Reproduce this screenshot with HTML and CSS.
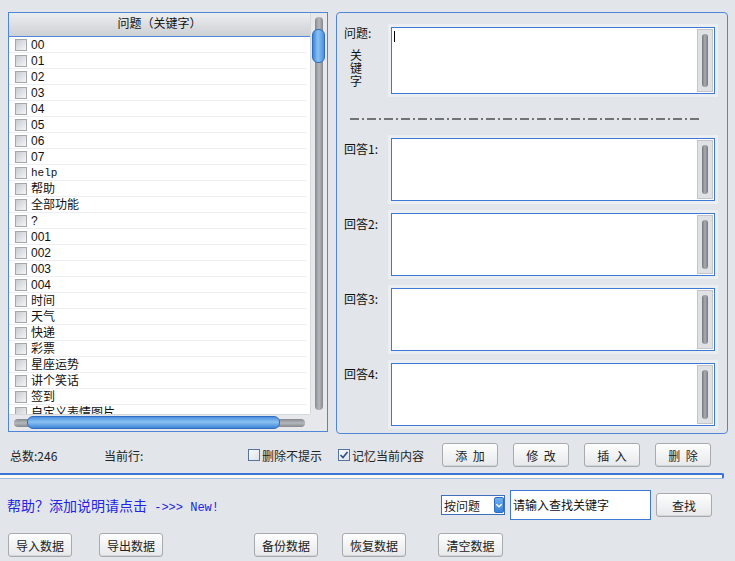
FILE: index.html
```html
<!DOCTYPE html>
<html lang="zh-CN">
<head>
<meta charset="utf-8">
<title>关键字回复</title>
<link rel="stylesheet" href="styles.css">
</head>
<body>
<div class="top">
  <div class="listbox">
    <div class="list-main">
      <div class="list-header">问题（关键字）</div>
      <div class="row"><span class="cb"></span><span>00</span></div>
      <div class="row"><span class="cb"></span><span>01</span></div>
      <div class="row"><span class="cb"></span><span>02</span></div>
      <div class="row"><span class="cb"></span><span>03</span></div>
      <div class="row"><span class="cb"></span><span>04</span></div>
      <div class="row"><span class="cb"></span><span>05</span></div>
      <div class="row"><span class="cb"></span><span>06</span></div>
      <div class="row"><span class="cb"></span><span>07</span></div>
      <div class="row"><span class="cb"></span><span class="mono">help</span></div>
      <div class="row"><span class="cb"></span><span>帮助</span></div>
      <div class="row"><span class="cb"></span><span>全部功能</span></div>
      <div class="row"><span class="cb"></span><span>?</span></div>
      <div class="row"><span class="cb"></span><span>001</span></div>
      <div class="row"><span class="cb"></span><span>002</span></div>
      <div class="row"><span class="cb"></span><span>003</span></div>
      <div class="row"><span class="cb"></span><span>004</span></div>
      <div class="row"><span class="cb"></span><span>时间</span></div>
      <div class="row"><span class="cb"></span><span>天气</span></div>
      <div class="row"><span class="cb"></span><span>快递</span></div>
      <div class="row"><span class="cb"></span><span>彩票</span></div>
      <div class="row"><span class="cb"></span><span>星座运势</span></div>
      <div class="row"><span class="cb"></span><span>讲个笑话</span></div>
      <div class="row"><span class="cb"></span><span>签到</span></div>
      <div class="row"><span class="cb"></span><span>自定义表情图片</span></div>
    </div>
    <div class="vscroll"><div class="vtrack"></div><div class="vthumb"></div></div>
    <div class="hscroll"><div class="htrack"></div><div class="hthumb"></div></div>
    <div class="corner"></div>
  </div>

  <div class="editor">
    <div class="field field-q">
      <div class="label">
        <div class="label-text">问题:</div>
        <div class="vertical">关键字</div>
      </div>
      <div class="tbox tbox-q"><span class="caret"></span><div class="tscroll"><i></i></div></div>
    </div>
    <div class="sep">
      <svg width="352" height="2" viewBox="0 0 352 2"><line x1="0" y1="1" x2="352" y2="1" stroke="#000" stroke-width="1" stroke-dasharray="9 3 2 3"/></svg>
    </div>
    <div class="field">
      <div class="label"><div class="label-text label-a">回答1:</div></div>
      <div class="tbox"><div class="tscroll"><i></i></div></div>
    </div>
    <div class="field">
      <div class="label"><div class="label-text label-a">回答2:</div></div>
      <div class="tbox"><div class="tscroll"><i></i></div></div>
    </div>
    <div class="field">
      <div class="label"><div class="label-text label-a">回答3:</div></div>
      <div class="tbox"><div class="tscroll"><i></i></div></div>
    </div>
    <div class="field field-last">
      <div class="label"><div class="label-text label-a">回答4:</div></div>
      <div class="tbox"><div class="tscroll"><i></i></div></div>
    </div>
  </div>
</div>

<div class="status">
  <span class="total">总数:246</span>
  <span class="current">当前行:</span>
  <label class="chk chk-1"><span class="chkbox"></span>删除不提示</label>
  <label class="chk chk-2"><span class="chkbox checked"><svg width="10" height="10" viewBox="0 0 10 10"><path d="M1.5 5 L4 7.5 L8.5 2" fill="none" stroke="#2b4f86" stroke-width="1.6"/></svg></span>记忆当前内容</label>
  <button class="btn">添 加</button>
  <button class="btn">修 改</button>
  <button class="btn">插 入</button>
  <button class="btn">删 除</button>
</div>

<div class="progress"></div>

<div class="search">
  <div class="help">帮助？添加说明请点击<span class="new"> -&gt;&gt;&gt; New!</span></div>
  <div class="select"><span class="select-text">按问题</span><span class="arrow"><svg width="9" height="9" viewBox="0 0 9 9"><path d="M1.5 3 L4.5 6 L7.5 3" fill="none" stroke="#fff" stroke-width="1.6"/></svg></span></div>
  <div class="input">请输入查找关键字</div>
  <button class="btn btn-find">查找</button>
</div>

<div class="bottom">
  <button class="btn btn-wide">导入数据</button>
  <button class="btn btn-wide b-export">导出数据</button>
  <button class="btn btn-wide b-backup">备份数据</button>
  <button class="btn btn-wide b-restore">恢复数据</button>
  <button class="btn btn-wide b-clear">清空数据</button>
</div>
</body>
</html>
```

FILE: styles.css
```css
* { box-sizing: border-box; }
html, body { margin: 0; }
body {
  width: 735px;
  height: 561px;
  overflow: hidden;
  background: #e2e6ea;
  font-family: "Liberation Sans", "Noto Sans CJK SC", sans-serif;
  font-size: 12px;
  color: #1a1a1a;
  padding-top: 12px;
}

/* ---------- top area ---------- */
.top { display: flex; height: 422px; }

.listbox {
  margin-left: 8px;
  width: 320px;
  height: 420px;
  border: 1px solid #4f86d9;
  background: #fff;
  display: grid;
  grid-template-columns: 301px 17px;
  grid-template-rows: 401px 17px;
}
.list-main { overflow: hidden; }
.list-header {
  height: 24px;
  line-height: 23px;
  text-align: center;
  background: linear-gradient(#eceef0, #cdd0d4);
  border-bottom: 1px solid #4f86d9;
  color: #111;
}
.row {
  height: 16px;
  display: flex;
  align-items: center;
  padding-left: 6px;
  border-bottom: 1px solid #eceef1;
  margin-right: 4px;
  line-height: 15px;
  color: #111;
}
.row span:last-child { padding-top: 2px; }
.mono { font-family: "Liberation Mono", monospace; font-size: 11px; }
.cb {
  width: 12px;
  height: 12px;
  flex: none;
  margin-right: 4px;
  border: 1px solid #a4a7ab;
  background: linear-gradient(135deg, #c9ccd0, #f4f5f6);
}

.vscroll, .hscroll, .corner { background: #e6e8eb; position: relative; }
.vscroll { border-left: 1px solid #d6d9dc; }
.vtrack {
  position: absolute; left: 4px; width: 8px; top: 4px; bottom: 4px;
  border-radius: 4px;
  background: linear-gradient(90deg, #85888c, #b5b8bc, #85888c);
}
.vthumb {
  position: absolute; left: 1px; width: 13px; top: 16px; height: 34px;
  border-radius: 6px;
  border: 1px solid #2f6cc4;
  background: linear-gradient(90deg, #3f86d8, #8cc2f2 45%, #4b8fdc);
}
.hscroll { border-top: 1px solid #d6d9dc; }
.htrack {
  position: absolute; top: 4px; height: 8px; left: 5px; right: 5px;
  border-radius: 4px;
  background: linear-gradient(#85888c, #b5b8bc, #85888c);
}
.hthumb {
  position: absolute; top: 1px; height: 13px; left: 18px; width: 253px;
  border-radius: 6px;
  border: 1px solid #2f6cc4;
  background: linear-gradient(#4b8fdc, #8cc2f2 45%, #3f86d8);
}

/* ---------- editor ---------- */
.editor {
  margin-left: 8px;
  width: 392px;
  height: 422px;
  border: 1px solid #4f86d9;
  border-radius: 4px;
  padding: 14px 12px 0 7px;
  display: flex;
  flex-direction: column;
}
.field { display: flex; flex: none; margin-bottom: 12px; }
.field-q, .field-last { margin-bottom: 0; }
.label { width: 47px; flex: none; font-family: "Noto Sans CJK SC", sans-serif; color: #111; }
.label-text { line-height: 12px; margin-top: 0; }
.label-a { padding-top: 5px; }
.vertical {
  width: 13px;
  margin: 9px 0 0 6px;
  line-height: 13px;
  font-size: 12px;
  word-break: break-all;
}
.tbox {
  width: 324px;
  height: 63px;
  border: 1px solid #3e78d6;
  background: #fff;
  display: flex;
  padding: 1px;
  box-shadow: 0 0 0 3px rgba(255, 255, 255, 0.35);
}
.tbox-q { height: 67px; }
.caret { width: 1px; height: 11px; background: #000; margin: 2px 0 0 1px; }
.tscroll {
  margin-left: auto;
  width: 16px;
  background: #dfe1e4;
  border: 1px solid #c2c5c9;
  display: flex;
  justify-content: center;
  padding: 4px 0;
}
.tscroll i {
  display: block;
  width: 6px;
  border-radius: 3px;
  background: linear-gradient(90deg, #75787c, #a9acb0, #75787c);
}
.sep { height: 44px; flex: none; padding: 24px 0 0 6px; }
.sep svg { display: block; }

/* ---------- status row ---------- */
.status {
  display: flex;
  align-items: center;
  height: 24px;
  margin-top: 9px;
  padding-left: 10px;
  font-family: "Noto Sans CJK SC", sans-serif;
  color: #222;
}
.total { width: 94px; font-size: 12px; }
.current { width: 144px; font-size: 12px; }
.chk { display: flex; align-items: center; }
.chk-1 { width: 90px; }
.chk-2 { width: 104px; }
.chkbox {
  width: 12px;
  height: 12px;
  margin-right: 2px;
  border: 1px solid #56749f;
  background: linear-gradient(135deg, #f8f9fa, #dfe3e8);
  display: flex;
  align-items: center;
  justify-content: center;
}
.btn {
  width: 56px;
  height: 24px;
  padding: 0;
  border: 1px solid #a7abb0;
  border-radius: 3px;
  background: linear-gradient(#fefefe, #e6e8ea);
  box-shadow: inset 0 -1px 0 #d3d6d9;
  font-family: "Noto Sans CJK SC", sans-serif;
  font-size: 12px;
  color: #222;
  word-spacing: 3px;
}
.status .btn + .btn { margin-left: 15px; }

.progress {
  margin-top: 6px;
  width: 724px;
  height: 6px;
  border-top: 2px solid #3b74d6;
  border-right: 2px solid #3b74d6;
  border-bottom: 1px solid #9fbbe6;
  border-radius: 0 2px 2px 0;
  background: #fbfbf1;
}

/* ---------- search row ---------- */
.search {
  display: flex;
  align-items: center;
  height: 30px;
  margin-top: 11px;
  padding-left: 7px;
}
.help {
  width: 434px;
  color: #2323e6;
  font-family: "Noto Sans CJK SC", sans-serif;
  font-size: 14px;
}
.new { font-family: "Liberation Mono", monospace; font-size: 12px; }
.select {
  width: 64px;
  height: 20px;
  border: 1px solid #3e6fb8;
  background: #fff;
  display: flex;
  align-items: center;
  padding-left: 2px;
  font-family: "Noto Sans CJK SC", sans-serif;
}
.select-text { width: 50px; }
.arrow {
  width: 10px;
  height: 16px;
  border-radius: 2px;
  background: linear-gradient(#6fb0ee, #3a82d8);
  border: 1px solid #2f6cc4;
  display: flex;
  align-items: center;
  justify-content: center;
}
.input {
  margin-left: 5px;
  width: 141px;
  height: 30px;
  border: 1px solid #3e78d6;
  background: #fff;
  padding-left: 2px;
  line-height: 28px;
  font-family: "Noto Sans CJK SC", sans-serif;
  color: #111;
}
.btn-find { margin-left: 5px; }

/* ---------- bottom row ---------- */
.bottom {
  display: flex;
  height: 24px;
  margin-top: 13px;
  padding-left: 8px;
}
.btn-wide { width: 64px; word-spacing: 0; }
.b-export { margin-left: 27px; }
.b-backup { margin-left: 91px; }
.b-restore { margin-left: 24px; }
.b-clear { margin-left: 32px; width: 65px; }
```
